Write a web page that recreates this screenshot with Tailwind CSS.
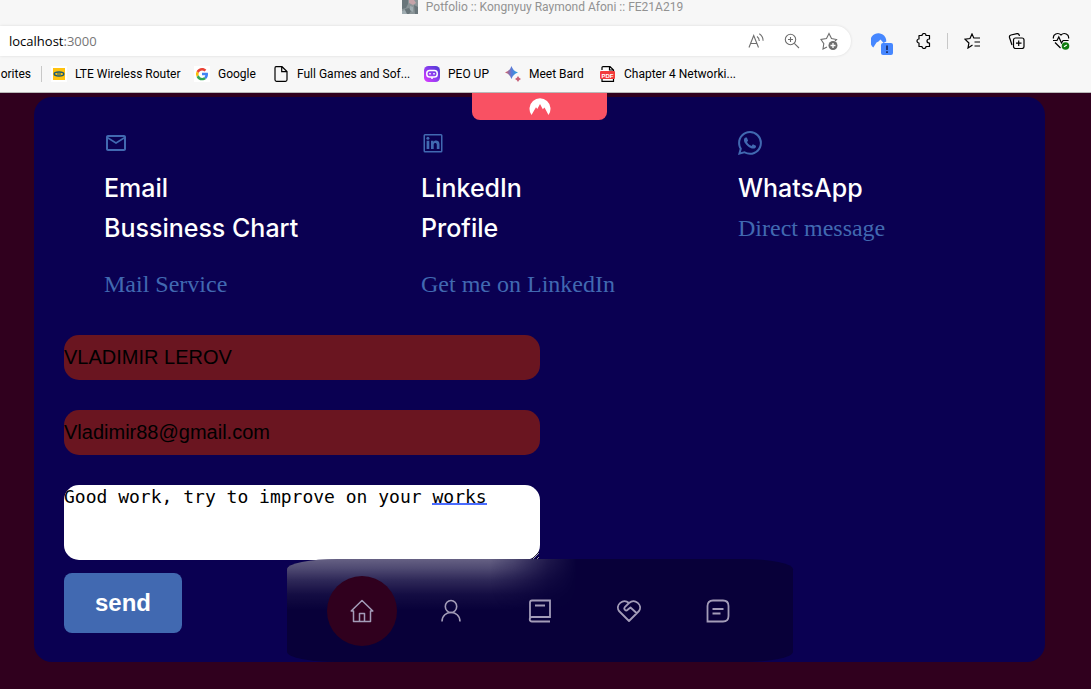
<!DOCTYPE html>
<html lang="en">
<head>
<meta charset="utf-8">
<meta name="viewport" content="width=device-width, initial-scale=1">
<title>Potfolio :: Kongnyuy Raymond Afoni :: FE21A219</title>
<script src="https://cdn.jsdelivr.net/npm/@tailwindcss/browser@4"></script>
</head>
<body class="min-h-screen flex flex-col overflow-x-hidden bg-[#30001e] font-['Roboto',sans-serif]">

<!-- Browser chrome -->
<header class="bg-[#f7f7f7] border-b border-[#b9b9b9] text-xs text-black">
  <div class="h-[26px] flex justify-center pr-1.5">
    <div class="flex gap-2 h-3.5 leading-[14px] text-[#929292]">
      <svg class="w-4 h-3.5 opacity-80" viewBox="0 0 16 14" aria-hidden="true"><path fill="#6f7c80" d="M0 0h16v14H0z"/><path fill="#46555c" d="M0 0h6v4l-2 4-4 1zM12 5l4 2v7h-3zM3 9l4-1 2 3-2 3H3z"/><path fill="#b98f96" d="M7 0h5l2 3-3 2-4-2z"/><path fill="#8a9aa0" d="M0 11l3-1 2 4H0zM8 6l3 1v5l-3-2z"/></svg>
      <span>Potfolio :: Kongnyuy Raymond Afoni :: FE21A219</span>
    </div>
  </div>
  <div class="flex items-center h-[30px]">
    <div class="flex items-center h-[30px] w-[851px] pl-[9px] pr-[13px] bg-white rounded-r-full shadow-[0_0_3px_rgba(0,0,0,0.12)]">
      <div class="flex-1 flex text-[13px] pt-px font-['Open_Sans',sans-serif]"><a href="http://localhost:3000" aria-label="Address">localhost<span class="text-[#767676]">:3000</span></a></div>
      <div class="flex gap-5 text-[#6e6e6e]">
        <button aria-label="Read aloud"><svg class="w-4 h-4" viewBox="0 0 16 16" fill="none" stroke="currentColor" stroke-width="1.1"><path d="M1 14.500L5.700 2.500L10.500 14.500M2.600 10.500h6.300M9 3.500c1.500 1 2.300 2.500 2.300 4.500M11.300.8c2.500 1.600 3.800 4 3.800 7"/></svg></button>
        <button aria-label="Zoom"><svg class="w-4 h-4" viewBox="0 0 16 16" fill="none" stroke="currentColor" stroke-width="1.100"><circle cx="6.500" cy="6.500" r="5.200"/><path d="M10.300 10.300L15 15M4 6.500h5M6.500 4v5"/></svg></button>
        <button aria-label="Add to favorites"><svg class="w-[18px] h-[18px]" viewBox="0 0 18 18" fill="none" stroke="currentColor" stroke-width="1.100"><path d="M7 15l-4 2 .8-5.300L1 7.500l5.500-.9L9 1.500l2.500 5.100 5 .9-1.500 1.500"/><circle cx="13" cy="13.500" r="4.500" fill="#6e6e6e" stroke="none"/><path stroke="#fff" stroke-width="1.300" d="M13 11v5M10.500 13.500h5"/></svg></button>
      </div>
    </div>
    <div class="flex items-center ml-5 text-black">
      <button aria-label="VPN"><svg class="w-[22px] h-[30px]" viewBox="0 0 22 30"><path fill="#4687ff" d="M2.300 21.500A8 8 0 1 1 15.300 15.500L12.500 17 9.500 13.500 7.500 15.500 5.500 16.500z"/><rect x="10" y="17" width="12" height="12" rx="2" fill="#4687ff"/><path stroke="#1c2f6b" stroke-width="1.800" d="M16 19.500v4.500M16 25.300v1.700"/></svg></button>
      <button class="ml-[23px]" aria-label="Extensions"><svg class="w-4 h-4" viewBox="0 0 16 16" fill="none" stroke="currentColor" stroke-width="1.200"><path d="M3 2.500h3a2 2 0 0 1 4 0h3.500V6c-1 0-2.500.5-2.500 2s1.500 2 2.500 2v3.500H10a2 2 0 0 1-4 0H3V10a2 2 0 0 1 0-4z" stroke-linejoin="round"/></svg></button>
      <span class="w-px h-4 ml-[15px] mr-4 bg-[#c8c8c8]"></span>
      <div class="flex items-center gap-[27px]">
        <button aria-label="Favorites"><svg class="w-[17px] h-4" viewBox="0 0 17 16" fill="none" stroke="currentColor" stroke-width="1.200"><path d="M8.500 12L4 15l.9-5L1 6.200l5-.7L8 1l1.800 4H16M10.500 9H16M10.500 13H16"/></svg></button>
        <button aria-label="Collections"><svg class="w-[17px] h-4" viewBox="0 0 17 16" fill="none" stroke="currentColor" stroke-width="1.200"><rect x="5.500" y="5" width="10.500" height="10.500" rx="2"/><path d="M10.700 7.500v5.500M8 10.200h5.500M4 12L1.500 4.500Q1 2.500 3 2l6-1.400Q11 .3 11.500 3"/></svg></button>
        <button aria-label="Browser essentials"><svg class="w-[18px] h-[18px]" viewBox="0 0 18 18" fill="none" stroke="currentColor" stroke-width="1.200"><path d="M1.500 6.500C.5 2 6 0 9 3c3-3 8.500-1 7.500 3.500M1 8.500h4L6.800 5l2.700 6 1.600-2.500h5.500M3 10.500L8.500 16"/><circle cx="13.500" cy="14" r="3.800" fill="#107c10" stroke="none"/><path stroke="#fff" d="M12 14.800l2.800-1.800"/></svg></button>
      </div>
    </div>
  </div>
  <nav class="flex items-center h-9 whitespace-nowrap" aria-label="Favorites bar">
    <a href="#" class="w-[31px] flex justify-end">orites</a>
    <span class="w-px h-4 ml-2.5 mr-[9px] bg-[#c8c8c8]"></span>
    <a href="#" class="flex items-center gap-2 w-[143px]"><svg class="w-4 h-4 shrink-0" viewBox="0 0 16 16"><path fill="#fff" d="M0 0h16v16H0z"/><path fill="#ffc20e" d="M2 2h12v12H2z"/><ellipse cx="8" cy="8" rx="4.800" ry="2" fill="#ffc20e" stroke="#175a78" stroke-width="1.400"/><path stroke="#175a78" d="M6 8h4"/></svg>LTE Wireless Router</a>
    <a href="#" class="flex items-center gap-2 w-[79px]"><svg class="w-4 h-4 shrink-0" viewBox="0 0 48 48"><path fill="#fff" d="M0 0h48v48H0z"/><path fill="#ea4335" d="M24 13.500c3 0 5.500 1 7.500 3l5.500-5.500C33.500 8 29.200 6 24 6 17 6 10.800 10 7.800 16l6.400 5c1.500-4.500 5.300-7.500 9.800-7.500z"/><path fill="#4285f4" d="M42 24.500c0-1.500-.1-2.700-.4-4H24v7.500h10c-.5 2.500-2 4.700-4 6l6.200 5c3.700-3.500 5.800-8.500 5.800-14.500z"/><path fill="#fbbc05" d="M14.200 28a11 11 0 0 1 0-7l-6.400-5a18 18 0 0 0 0 16.500z"/><path fill="#34a853" d="M24 43c5 0 9-1.500 12.200-4.200L30 34c-5.500 3.500-13 1.500-15.800-6l-6.400 4.800C10.800 39 17 43 24 43z"/></svg>Google</a>
    <a href="#" class="flex items-center gap-2 w-[151px]"><svg class="w-4 h-4 shrink-0" viewBox="0 0 16 16" fill="none" stroke="#000" stroke-width="1.200"><path d="M3 .7h6L14 5.500v8.300q0 1.500-1.500 1.500h-9Q2 15.300 2 13.800V2Q2 .7 3 .7zM8.700.7v5H14"/></svg>Full Games and Sof...</a>
    <a href="#" class="flex items-center gap-2 w-[81px]"><svg class="w-4 h-4 shrink-0" viewBox="0 0 16 16"><defs><linearGradient id="bot" x1="0" y1="1" x2="1" y2="0"><stop stop-color="#e23bff"/><stop offset=".5" stop-color="#8b3df0"/><stop offset="1" stop-color="#4a3ad0"/></linearGradient></defs><rect width="16" height="16" rx="4.500" fill="url(#bot)"/><rect x="2.800" y="4.500" width="10.400" height="6.500" rx="2.800" fill="none" stroke="#fff" stroke-width="1.500"/><path stroke="#fff" stroke-width="1.500" d="M6 7v1.500M10 7v1.500M8 11v2"/></svg>PEO UP</a>
    <a href="#" class="flex items-center gap-2 w-[95px]"><svg class="w-4 h-4 shrink-0" viewBox="0 0 16 16"><defs><linearGradient id="spark"><stop stop-color="#e0605e"/><stop offset=".5" stop-color="#5a7ad8"/><stop offset="1" stop-color="#25a5e0"/></linearGradient></defs><path fill="url(#spark)" d="M6.500 0Q8 5 13 6.500 8 8 6.500 13 5 8 0 6.500 5 5 6.500 0z"/><path fill="#c86078" d="M13 10q.8 2.200 3 3-2.200.8-3 3-.8-2.200-3-3 2.200-.8 3-3z"/></svg>Meet Bard</a>
    <a href="#" class="flex items-center gap-2"><svg class="w-4 h-4 shrink-0" viewBox="0 0 16 16"><path d="M2 4V1.500Q2 .6 3 .6h7L13.500 4v11.400H2V12M9.500.6V4h4" fill="#fff" stroke="#000" stroke-width="1.200"/><rect y="5" width="15" height="8" rx="1" fill="#f23c3c"/><text x="7.500" y="11.500" font-size="6" font-weight="700" text-anchor="middle" fill="#fff" font-family="Liberation Sans, sans-serif">PDF</text></svg>Chapter 4 Networki...</a>
  </nav>
</header>

<main class="relative pt-1 pb-[27px] pl-[34px] pr-[46px]">
  <button class="absolute top-0 left-[472px] w-[135px] h-[27px] flex justify-center items-end pb-[5px] rounded-b-lg bg-[#f95163]" aria-label="VPN panel"><svg class="w-[22px] h-[17px]" viewBox="0 0 22 17"><path fill="#fff" d="M2.500 17A10.500 10.500 0 1 1 19.500 17L15.500 9.500 13.800 11.300 11 6 8.300 11 7 9.300z"/></svg></button>

  <section class="rounded-[18px] bg-[#0a0052] px-[30px] pt-[34px] pb-[29px]">
    <div class="grid grid-cols-3 text-[#4169b1] font-['Liberation_Serif',serif] text-2xl leading-10">
      <article class="pl-10">
        <svg class="w-6 h-6" viewBox="0 0 24 24" fill="currentColor"><path d="M22 6c0-1.100-.9-2-2-2H4c-1.100 0-2 .9-2 2v12c0 1.100.9 2 2 2h16c1.100 0 2-.9 2-2V6zm-2 0l-8 4.990L4 6h16zm0 12H4V8l8 5 8-5v10z"/></svg>
        <h3 class="mt-[13px] text-white text-[25px] leading-10 font-medium font-['Inter',sans-serif]">Email<br>Bussiness Chart</h3>
        <a href="#" class="block mt-4">Mail Service</a>
      </article>
      <article class="pl-10">
        <svg class="w-6 h-6" viewBox="0 0 24 24" fill="currentColor"><path d="M4 3h16a1.500 1.500 0 0 1 1.500 1.500v15.500a1.500 1.500 0 0 1-1.500 1.500H4a1.500 1.500 0 0 1-1.500-1.500V4.500A1.500 1.500 0 0 1 4 3zm0 1.500V20h16V4.500z"/><circle cx="6.900" cy="7.300" r="1.500"/><path d="M5.600 9.800h2.700V18H5.600zM10 9.800h2.500v1.100c1.400-2.200 6-1.800 6 2.200V18h-2.700v-4.300c0-2.500-3.100-2.300-3.100 0V18H10z"/></svg>
        <h3 class="mt-[13px] text-white text-[25px] leading-10 font-medium font-['Inter',sans-serif]">LinkedIn<br>Profile</h3>
        <a href="#" class="block mt-4">Get me on LinkedIn</a>
      </article>
      <article class="pl-10">
        <svg class="w-6 h-6" viewBox="0 0 16 16" fill="currentColor"><path d="M13.601 2.326A7.854 7.854 0 0 0 7.994 0C3.627 0 .068 3.558.064 7.926c0 1.399.366 2.760 1.057 3.965L0 16l4.204-1.102a7.933 7.933 0 0 0 3.790.965h.004c4.368 0 7.926-3.558 7.930-7.930A7.898 7.898 0 0 0 13.600 2.326zM7.994 14.521a6.573 6.573 0 0 1-3.356-.920l-.240-.144-2.494.654.666-2.433-.156-.251a6.560 6.560 0 0 1-1.007-3.505c0-3.626 2.957-6.584 6.591-6.584a6.560 6.560 0 0 1 4.660 1.931 6.557 6.557 0 0 1 1.928 4.660c-.004 3.639-2.961 6.592-6.592 6.592zm3.615-4.934c-.197-.099-1.170-.578-1.353-.646-.182-.065-.315-.099-.445.099-.133.197-.513.646-.627.775-.114.133-.232.148-.430.050-.197-.100-.836-.308-1.592-.985-.590-.525-.985-1.175-1.103-1.372-.114-.198-.011-.304.088-.403.087-.088.197-.232.296-.346.100-.114.133-.198.198-.330.065-.134.034-.248-.015-.347-.050-.099-.445-1.076-.612-1.470-.160-.389-.323-.335-.445-.340-.114-.007-.247-.007-.380-.007a.729.729 0 0 0-.529.247c-.182.198-.691.677-.691 1.654 0 .977.710 1.916.810 2.049.098.133 1.394 2.132 3.383 2.992.470.205.840.326 1.129.418.475.152.904.129 1.246.080.380-.058 1.171-.480 1.338-.943.164-.464.164-.860.114-.943-.049-.084-.182-.133-.380-.232z"/></svg>
        <h3 class="mt-[13px] text-white text-[25px] leading-10 font-medium font-['Inter',sans-serif]">WhatsApp</h3>
        <a href="#" class="block">Direct message</a>
      </article>
    </div>

    <form class="mt-[31px] w-1/2 font-['Liberation_Sans',sans-serif]">
      <label for="name" class="sr-only">Name</label>
      <input id="name" type="text" value="VLADIMIR LEROV" class="block w-full h-[45px] mb-[30px] rounded-[15px] bg-[#6a1520] text-xl text-black outline-none">
      <label for="email" class="sr-only">Email</label>
      <input id="email" type="email" value="Vladimir88@gmail.com" class="block w-full h-[45px] mb-[30px] rounded-[15px] bg-[#6a1520] text-xl text-black outline-none">
      <label for="message" class="sr-only">Message</label>
      <div class="relative mb-[13px] font-['DejaVu_Sans_Mono',monospace] text-lg leading-6">
        <textarea id="message" spellcheck="false" class="block w-full h-[75px] rounded-[15px] bg-white text-black outline-none">Good work, try to improve on your works</textarea>
        <span class="absolute top-[18px] left-[34ch] w-[5ch] h-0.5 bg-[#4a6cff]"></span>
      </div>
      <button type="button" class="block w-[118px] h-[60px] rounded-lg bg-[#4169b1] text-2xl font-bold text-white">send</button>
    </form>
  </section>

  <!-- Floating navigation, lit along its upper left edge -->
  <nav class="absolute left-[287px] top-[466px] w-[506px] h-[103px] px-[31px] overflow-hidden rounded-[10%] bg-[#080039] text-[#a39cb8]" aria-label="Sections">
    <div class="absolute left-0 top-0 w-[290px] h-[52px] bg-[linear-gradient(to_bottom,rgba(255,255,255,0.38),rgba(255,255,255,0.29)_18%,rgba(255,255,255,0.16)_40%,rgba(255,255,255,0.05)_68%,transparent)] [mask-image:linear-gradient(to_right,black_70%,rgba(0,0,0,0.75)_78%,rgba(0,0,0,0.25)_90%,transparent)]"></div>
    <div class="relative grid grid-cols-5 h-full items-center justify-items-center">
      <a href="#" aria-label="Home" class="flex items-center justify-center size-[70px] rounded-full bg-[#30001e]"><svg class="w-6 h-6" viewBox="0 0 24 24" fill="none" stroke="currentColor" stroke-width="1.500" stroke-linejoin="round"><path d="M3.500 12H1.200L12 1.500 22.800 12h-2.300v10.500h-17zM9.500 22.500v-8h5v8"/></svg></a>
      <a href="#" aria-label="About" class="flex"><svg class="w-6 h-6" viewBox="0 0 24 24" fill="none" stroke="currentColor" stroke-width="1.600"><ellipse cx="12" cy="7.500" rx="5.700" ry="6"/><path d="M3 22.500c0-12 18-12 18 0"/></svg></a>
      <a href="#" aria-label="Experience" class="flex"><svg class="w-6 h-6" viewBox="0 0 24 24" fill="none" stroke="currentColor" stroke-width="1.800"><path d="M22 22.500H4a2.200 2.200 0 0 1 0-4.500H22V1.500H4Q2 1.500 2 3.500V20M7 6.500h10"/></svg></a>
      <a href="#" aria-label="Services" class="flex"><svg class="w-6 h-6" viewBox="0 0 24 24" fill="none" stroke="currentColor" stroke-width="1.800" stroke-linejoin="round"><path d="M12 4C6-1-2 6 2 12l10 10 10-10C26 6 18-1 12 4L7.800 8.200c-1.500 2 1 4.300 2.800 2.600L13.500 8.500 19.500 14"/></svg></a>
      <a href="#" aria-label="Contact" class="flex"><svg class="w-6 h-6" viewBox="0 0 24 24" fill="none" stroke="currentColor" stroke-width="1.800"><path d="M1.500 22.500V7Q1.500 1.500 7 1.500h10Q22.500 1.500 22.500 7v10q0 5.500-5.500 5.500zM6.500 10h11M6.500 14.500h8"/></svg></a>
    </div>
  </nav>
</main>
</body>
</html>
